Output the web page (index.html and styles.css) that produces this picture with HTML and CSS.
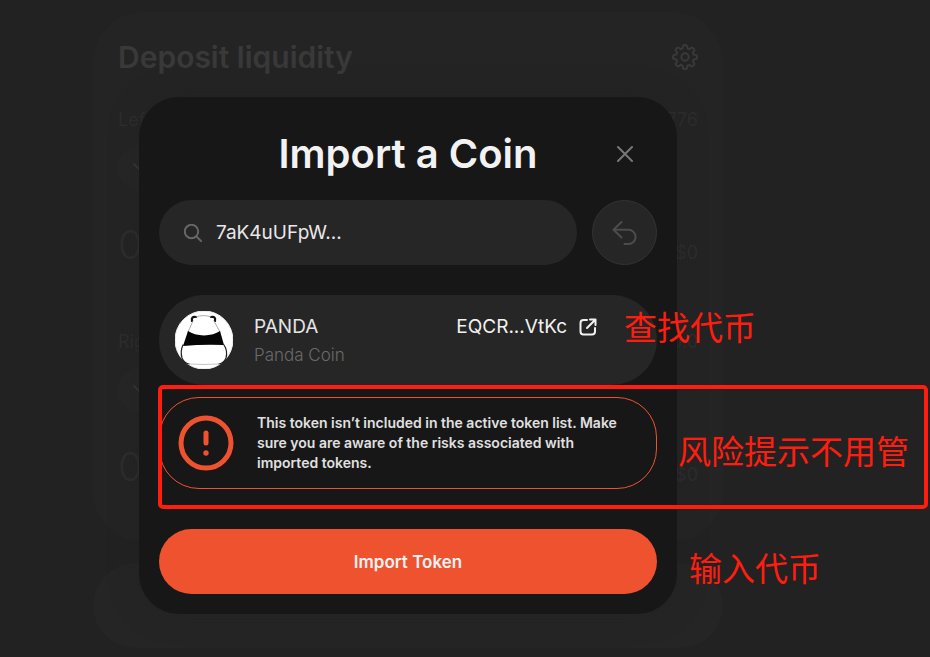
FILE: index.html
```html
<!DOCTYPE html>
<html lang="en">
<head>
<meta charset="utf-8">
<meta name="viewport" content="width=device-width, initial-scale=1">
<title>Import a Coin</title>
<link rel="stylesheet" href="styles.css">
</head>
<body>
<main class="page">
  <section class="card">
    <header class="card-head">
      <h1>Deposit liquidity</h1>
      <svg class="gear" viewBox="0 0 26 26" aria-hidden="true"><path d="M10.9 1.8Q13 .2 15.1 1.8L15.5 4.4L17.3 5.2L19.5 3.6Q22.1 3.9 22.4 6.5L20.8 8.7L21.6 10.5L24.2 10.9Q25.8 13 24.2 15.1L21.6 15.5L20.8 17.3L22.4 19.5Q22.1 22.1 19.5 22.4L17.3 20.8L15.5 21.6L15.1 24.2Q13 25.8 10.9 24.2L10.5 21.6L8.7 20.8L6.5 22.4Q3.9 22.1 3.6 19.5L5.2 17.3L4.4 15.5L1.8 15.1Q.2 13 1.8 10.9L4.4 10.5L5.2 8.7L3.6 6.5Q3.9 3.9 6.5 3.6L8.7 5.2L10.5 4.4Z"/><circle cx="13" cy="13" r="3.7"/></svg>
    </header>
    <div class="side">
      <div class="row"><span>Left</span><span>776</span></div>
      <div class="pill"><svg class="chevron" viewBox="0 0 16 10" aria-hidden="true"><path d="M1 1l7 7 7-7"/></svg></div>
      <div class="row amount"><span class="big">0</span><span>$0</span></div>
    </div>
    <div class="side">
      <div class="row"><span>Right</span><span>0.0</span></div>
      <div class="pill"><svg class="chevron" viewBox="0 0 16 10" aria-hidden="true"><path d="M1 1l7 7 7-7"/></svg></div>
      <div class="row amount"><span class="big">0</span><span>$0</span></div>
    </div>
  </section>
  <div class="submit"></div>
</main>

<div class="overlay">
  <section class="modal" role="dialog" aria-labelledby="modal-title">
    <header class="modal-head">
      <h2 id="modal-title">Import a Coin</h2>
      <button class="close" type="button" aria-label="Close"><svg viewBox="0 0 16 16"><path d="M1 1l14 14M15 1L1 15"/></svg></button>
    </header>
    <div class="search-row">
      <label class="search">
        <svg viewBox="0 0 18 18" aria-hidden="true"><circle cx="7.5" cy="7.5" r="6.7"/><path d="M12.4 12.4l4.6 4.6"/></svg>
        <input type="text" value="7aK4uUFpW..." aria-label="Token address">
      </label>
      <button class="back" type="button" aria-label="Back"><svg viewBox="0 0 26 26"><path d="M9.5 2L1.5 9.8L9.5 17.5M1.5 9.8H16.500A7 7 0 0 1 16.500 24H12.500"/></svg></button>
    </div>
    <div class="token">
      <svg class="avatar" viewBox="0 0 58 58" aria-hidden="true">
        <circle cx="29" cy="29" r="29" fill="#fff"/>
        <path d="M17 10Q16 5 21 6M40 10Q41 5 36 6" fill="none" stroke="#111" stroke-width="2.2"/>
        <path d="M21 6Q29 3 36 6M18 10L13 21M39 10L45 21" fill="none" stroke="#999" stroke-width=".8"/>
        <path d="M13 20Q19 24 29 24.500Q39 24 45 20L49 34Q29 33 8 35Z" fill="#050505" stroke="none"/>
        <path d="M8 34Q5 40 7 47Q9 52 14 53M49 34Q53 40 51 47Q49 52 44 53" fill="none" stroke="#222" stroke-width="1.200"/>
        <path d="M14 53Q29 54 44 53" fill="none" stroke="#aaa" stroke-width=".7"/>
      </svg>
      <div class="names"><strong>PANDA</strong><span>Panda Coin</span></div>
      <a class="address" href="#">EQCR...VtKc
        <svg viewBox="0 0 18 18" aria-hidden="true"><path d="M8 2H4.500Q1.500 2 1.500 5V13.500Q1.500 16.500 4.500 16.500H13Q16 16.500 16 13.500V10M11 1.500H16.500V7M16.500 1.500L8 10"/></svg>
      </a>
    </div>
    <div class="warning">
      <svg viewBox="0 0 56 56" aria-hidden="true"><circle cx="28" cy="28" r="25"/><path d="M28 18V28"/><circle class="dot" cx="28" cy="38" r="2.700"/></svg>
      <p>This token isn’t included in the active token list. Make sure you are aware of the risks associated with imported tokens.</p>
    </div>
    <button class="import" type="button">Import Token</button>
  </section>
</div>

<div class="mark-box"></div>
<div class="note note-find">查找代币</div>
<div class="note note-risk">风险提示不用管</div>
<div class="note note-enter">输入代币</div>
</body>
</html>
```

FILE: styles.css
```css
* { box-sizing: border-box; }

body {
  margin: 0;
  min-height: 100vh;
  padding-right: 114px;
  position: relative;
  background: #222;
  color: #f2f2f2;
  font-family: Inter, "Noto Sans CJK SC", sans-serif;
  overflow: hidden;
}

h1, h2, p { margin: 0; }
svg { display: block; fill: none; stroke: currentColor; stroke-linecap: round; stroke-linejoin: round; }
button { border: 0; padding: 0; font: inherit; color: inherit; cursor: pointer; }

/* Dimmed page behind the dialog */
.page {
  max-width: 630px;
  margin: 0 auto;
  padding-top: 12px;
}
.card {
  padding: 25px 25px 50px;
  border-radius: 50px;
  background: #242424;
  color: #2d2d2d;
}
.card-head {
  display: flex;
  justify-content: space-between;
  align-items: center;
  height: 40px;
  margin-bottom: 31px;
  color: #393939;
}
.card-head h1 { font-size: 30px; line-height: 40px; font-weight: 600; }
.gear { width: 26px; height: 26px; stroke-width: 2; }
.side + .side { margin-top: 60px; }
.row {
  display: flex;
  justify-content: space-between;
  align-items: center;
  font-size: 18px;
  line-height: 24px;
}
.pill {
  display: flex;
  align-items: center;
  width: 120px;
  height: 48px;
  margin-top: 12px;
  padding-left: 15px;
  border-radius: 24px;
  background: #262626;
}
.chevron { width: 16px; height: 10px; stroke-width: 2; color: #363636; }
.amount { align-items: baseline; height: 50px; margin-top: 28px; }
.big { font-size: 40px; line-height: 50px; font-weight: 300; }
.submit {
  height: 85px;
  margin-top: 21px;
  border-radius: 43px;
  background: #252525;
}

/* Dialog */
.overlay {
  position: absolute;
  inset: 0 114px 0 0;
  padding: 97px 20px 43px;
}
.modal {
  max-width: 538px;
  margin: 0 auto;
  padding: 23px 20px 20px;
  border-radius: 40px;
  background: #171717;
  box-shadow: 0 0 30px rgba(32, 32, 32, .4);
}
.modal-head {
  display: grid;
  grid-template-columns: 65px 1fr 65px;
  align-items: center;
  margin-bottom: 12px;
}
.modal-head h2 {
  grid-column: 2;
  font-size: 40px;
  line-height: 68px;
  font-weight: 600;
  text-align: center;
  white-space: nowrap;
}
.close { display: grid; place-items: center; height: 65px; background: none; color: #777; }
.close svg { width: 16px; height: 16px; stroke-width: 2; }
.search-row { display: flex; gap: 15px; }
.search {
  display: flex;
  flex: 1;
  align-items: center;
  gap: 14px;
  height: 65px;
  padding: 0 25px;
  border-radius: 33px;
  background: #262626;
}
.search svg { flex: none; width: 18px; height: 18px; stroke-width: 2; color: #666; }
.search input {
  flex: 1;
  min-width: 0;
  padding: 0;
  border: 0;
  outline: 0;
  background: none;
  color: #e8e8e8;
  font: 400 19px/30px Inter, sans-serif;
}
.back {
  display: grid;
  place-items: center;
  width: 65px;
  height: 65px;
  border: 1px solid #333;
  border-radius: 50%;
  background: #262626;
  color: #4c4c4c;
}
.back svg { width: 26px; height: 26px; stroke-width: 2; }
.token {
  display: flex;
  align-items: flex-start;
  height: 90px;
  margin-top: 30px;
  padding: 16px 60px 16px 16px;
  border-radius: 45px;
  background: #262626;
}
.avatar { flex: none; width: 58px; height: 58px; }
.names { display: grid; flex: 1; margin-left: 21px; }
.names strong { font-size: 19px; line-height: 32px; font-weight: 400; color: #e4e4e4; }
.names span { font-size: 17px; line-height: 24px; font-weight: 300; color: #6a6a6a; }
.address {
  display: flex;
  align-items: center;
  gap: 12px;
  color: #f2f2f2;
  font-size: 19px;
  line-height: 32px;
  text-decoration: none;
}
.address svg { width: 18px; height: 18px; stroke-width: 2; }
.warning {
  display: flex;
  align-items: center;
  gap: 23px;
  min-height: 92px;
  margin-top: 12px;
  padding: 15px 18px;
  border: 1px solid #ef522f;
  border-radius: 40px;
}
.warning svg { flex: none; width: 56px; height: 56px; color: #ef522f; stroke-width: 5; }
.warning .dot { fill: currentColor; stroke: none; }
.warning p {
  max-width: 380px;
  font-size: 14px;
  line-height: 20px;
  font-weight: 600;
  color: #e0e0e0;
}
.import {
  display: block;
  width: 100%;
  height: 65px;
  margin-top: 40px;
  border-radius: 33px;
  background: #ef522f;
  font-size: 17px;
  font-weight: 600;
}

/* Hand-placed annotations over the page */
.mark-box {
  position: absolute;
  left: 158px;
  right: 2px;
  top: 385px;
  height: 124px;
  border: 4px solid #ff1d0f;
  border-radius: 5px;
}
.note {
  position: absolute;
  color: #ff1d0f;
  font: 400 33px/40px "Noto Sans CJK SC", sans-serif;
  white-space: nowrap;
}
.note-find { left: 624px; top: 306px; }
.note-risk { left: 678px; top: 430px; }
.note-enter { left: 689px; top: 547px; }
```
